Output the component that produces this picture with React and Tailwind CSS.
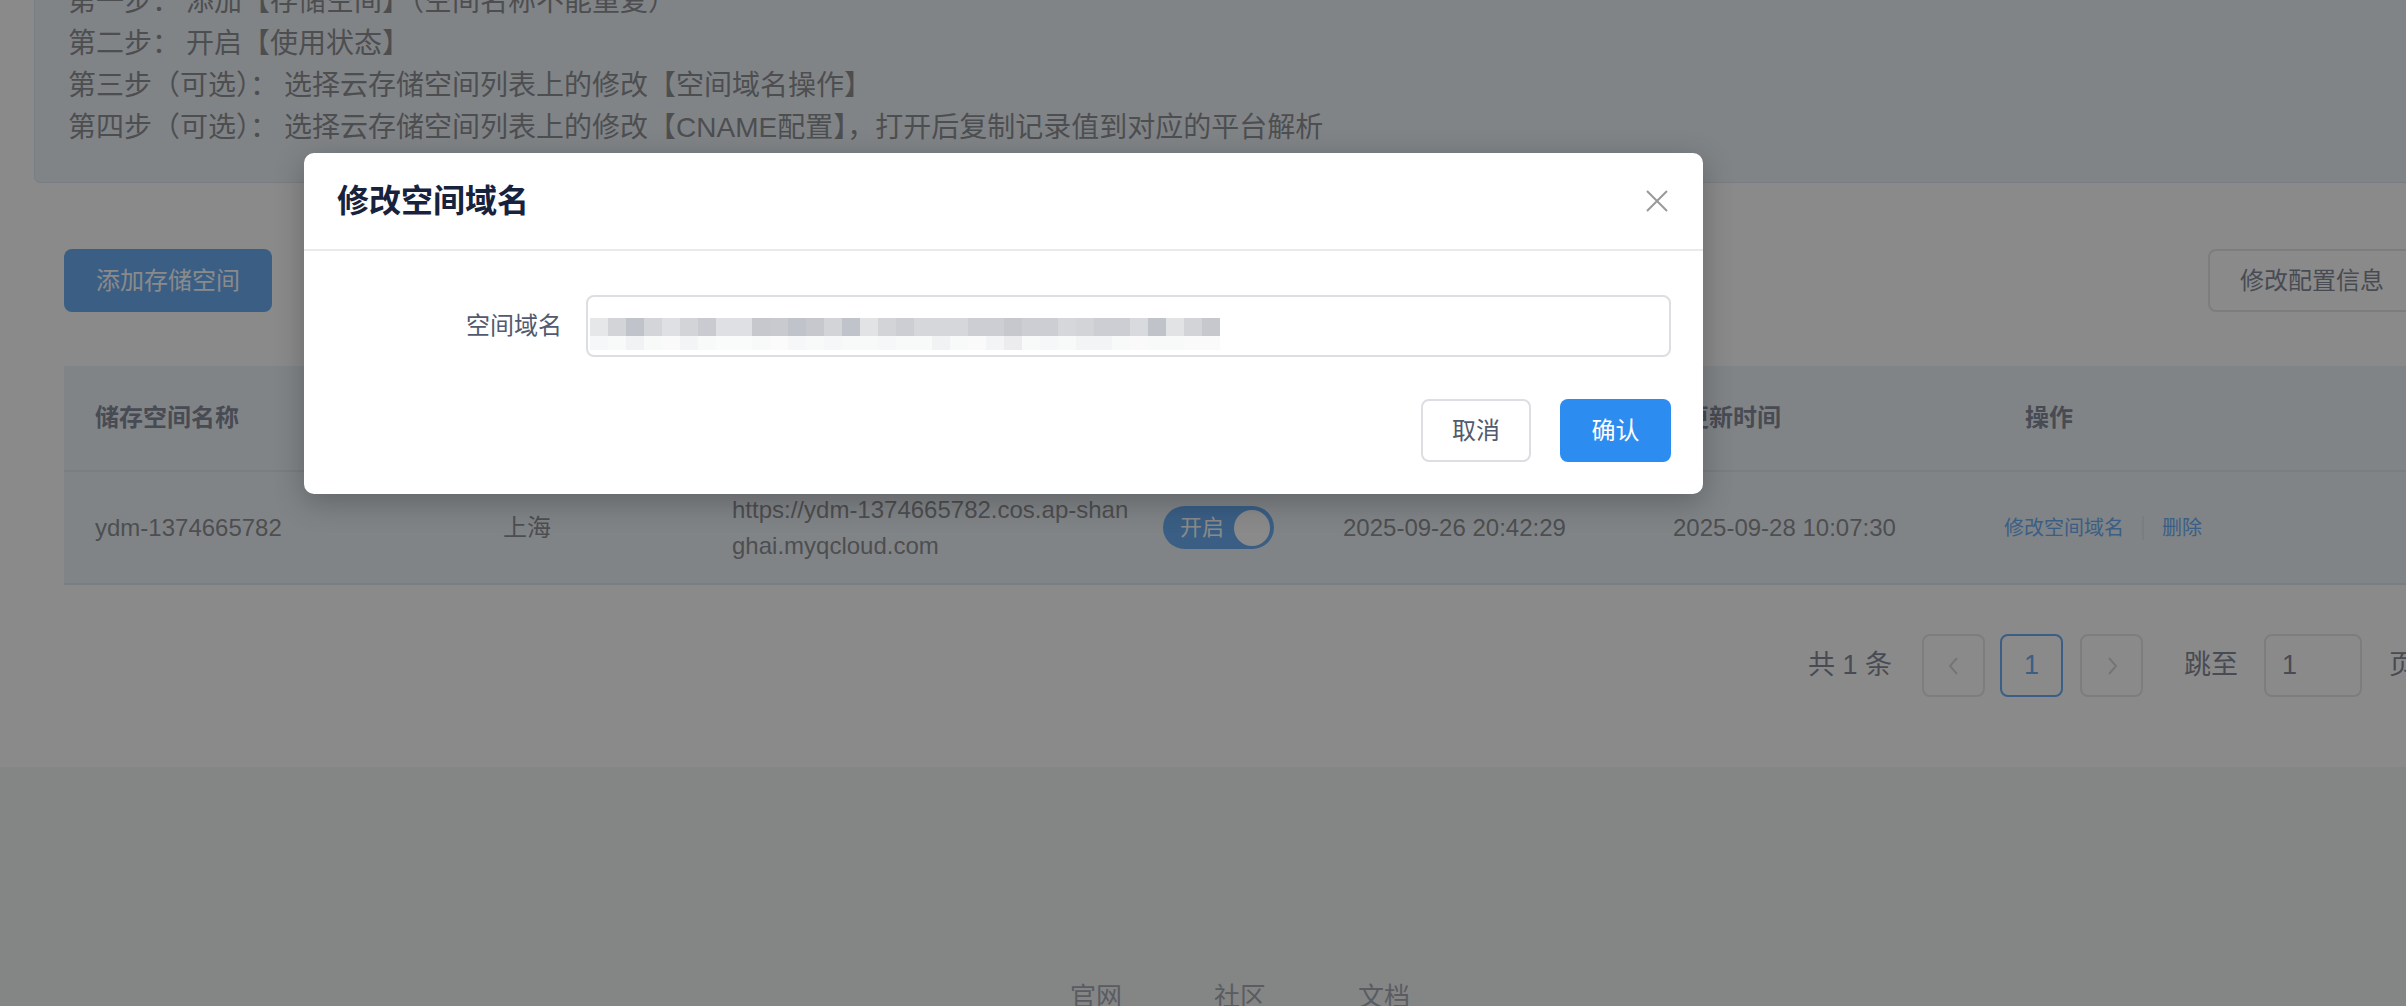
import { useState } from 'react'

const steps = [
  ["第一步：", "添加【存储空间】（空间名称不能重复）"],
  ["第二步：", "开启【使用状态】"],
  ["第三步（可选）：", "选择云存储空间列表上的修改【空间域名操作】"],
  ["第四步（可选）：", "选择云存储空间列表上的修改【CNAME配置】，打开后复制记录值到对应的平台解析"],
]

// pixelated (redacted) domain value in the input
const topRow = ["#e6e7e9","#d3d4d8","#c0c3c9","#d4d5d9","#dfe0e3","#d3d4d8","#c9cbd0","#dfe0e3","#dfe0e3","#c6c8cd","#c8cacf","#c0c3c9","#c6c8cd","#d3d4d8","#c0c3c9","#e2e3e5","#d3d4d8","#ccced3","#d6d7db","#d6d7db","#d6d7db","#ccced3","#ccced3","#c6c8cd","#ccced3","#ccced3","#d6d7db","#d3d4d8","#ccced3","#ccced3","#d9dadd","#c0c3c9","#e2e3e5","#d3d4d8","#c6c8cd"]
const bottomRow = ["#f6f7f8","#f8f9f9","#f1f2f3","#f8f9f9","#fafafa","#f3f4f5","#f8f9f9","#fafbfb","#fafbfb","#f8f9f9","#fbfbfb","#f6f7f8","#f8f9f9","#f6f7f8","#f8f9f9","#f8f9f9","#f6f7f8","#f8f9f9","#f8f9f9","#f1f2f4","#f8f9f9","#fafafa","#f3f4f5","#ececee","#f8f9f9","#f6f7f8","#f8f9f9","#f3f4f5","#f3f4f5","#f8f9f9","#fafafa","#f8f9f9","#f8f9f9","#fafafa","#fafafa"]

const Mosaic = () => (
  <svg width="630" height="32" viewBox="0 0 630 32">
    {topRow.map((c, i) => <rect key={"t" + i} x={i * 18} y="0" width="18" height="18" fill={c} />)}
    {bottomRow.map((c, i) => <rect key={"b" + i} x={i * 18} y="18" width="18" height="14" fill={c} />)}
  </svg>
)

const Chevron = ({ dir }) => (
  <svg width="12" height="20" viewBox="0 0 12 20" fill="none" stroke="#c5c8ce" strokeWidth="2">
    {dir === "left" ? <path d="M9 2 L2 10 L9 18" /> : <path d="M3 2 L10 10 L3 18" />}
  </svg>
)

const cols = "grid grid-cols-[408px_229px_431px_180px_330px_331px_443px]"

const App = () => {
  const [domain, setDomain] = useState("")

  return (
    <div className="relative w-[2406px] h-[1006px] overflow-hidden bg-white font-['Liberation_Sans','Noto_Sans_CJK_SC',sans-serif]">
      <div className="w-[2480px] flex flex-col">
        {/* main card */}
        <div className="bg-white h-[767px] px-[34px]">
          <div className="-mt-[53px] rounded-[6px] border border-[#cfdcec] bg-[#e6eef8] px-[33px] py-[33px] text-[28px] leading-[42px] text-[#606266]">
            {steps.map(([head, rest]) => (
              <p key={head} className="whitespace-nowrap">
                {head}<span className="ml-[6px]">{rest}</span>
              </p>
            ))}
          </div>

          <div className="px-[30px]">
            <div className="mt-[66px] flex justify-between">
              <button className="h-[63px] rounded-[8px] bg-[#2d8cf0] px-[32px] text-[24px] text-white">添加存储空间</button>
              <button className="h-[63px] rounded-[8px] border-2 border-[#dcdee2] bg-white px-[30px] text-[24px] text-[#515a6e]">修改配置信息</button>
            </div>

            <div className="mt-[54px] bg-[#e8eff8]">
              <div className={cols + " h-[106px] items-center border-b-2 border-[#d5dde8] bg-[#e6eef8] text-[24px] font-bold text-[#515a6e]"}>
                <div className="pl-[31px]">储存空间名称</div>
                <div className="pl-[31px]">所属地域</div>
                <div className="pl-[31px]">访问域名</div>
                <div className="pl-[31px]">使用状态</div>
                <div className="pl-[31px]">创建时间</div>
                <div className="pl-[43px]">更新时间</div>
                <div className="pl-[52px]">操作</div>
              </div>
              <div className={cols + " h-[113px] items-center border-b-2 border-[#d5dde8] text-[24px] text-[#606266]"}>
                <div className="pl-[31px]">ydm-1374665782</div>
                <div className="pl-[31px]">上海</div>
                <div className="pl-[31px] w-[436px] break-all leading-[36px]">https://ydm-1374665782.cos.ap-shanghai.myqcloud.com</div>
                <div className="pl-[31px]">
                  <div className="flex h-[43px] w-[111px] items-center justify-between rounded-full bg-[#2d8cf0] pl-[17px] pr-[4px]">
                    <span className="text-[22px] text-white">开启</span>
                    <span className="h-[36px] w-[36px] rounded-full bg-white"></span>
                  </div>
                </div>
                <div className="pl-[31px]">2025-09-26 20:42:29</div>
                <div className="pl-[31px]">2025-09-28 10:07:30</div>
                <div className="flex items-center pl-[31px] text-[20px] text-[#2d8cf0]">
                  <span>修改空间域名</span>
                  <span className="mx-[18px] h-[24px] w-[2px] bg-[#d5dde8]"></span>
                  <span>删除</span>
                </div>
              </div>
            </div>

            <div className="mt-[49px] flex items-center justify-end text-[27px] text-[#515a6e]">
              <span className="mr-[30px]">共 1 条</span>
              <div className="flex h-[63px] w-[63px] items-center justify-center rounded-[8px] border-2 border-[#dcdee2] bg-white">
                <Chevron dir="left" />
              </div>
              <div className="ml-[15px] flex h-[63px] w-[63px] items-center justify-center rounded-[8px] border-2 border-[#2d8cf0] bg-white text-[#2d8cf0]">1</div>
              <div className="ml-[17px] flex h-[63px] w-[63px] items-center justify-center rounded-[8px] border-2 border-[#dcdee2] bg-white">
                <Chevron dir="right" />
              </div>
              <span className="ml-[41px]">跳至</span>
              <div className="ml-[26px] flex h-[63px] w-[98px] items-center rounded-[8px] border-2 border-[#dcdee2] bg-white pl-[16px]">1</div>
              <span className="ml-[27px]">页</span>
            </div>
          </div>
        </div>

        {/* footer */}
        <div className="h-[300px] bg-[#eff3f1] pt-[212px]">
          <div className="flex justify-center gap-[92px] text-[26px] leading-[36px] text-[#808695]">
            <span>官网</span>
            <span>社区</span>
            <span>文档</span>
          </div>
        </div>
      </div>

      {/* modal mask */}
      <div className="absolute inset-0 bg-[rgba(66,66,66,0.62)]"></div>

      {/* modal */}
      <div className="absolute left-[304px] top-[153px] w-[1399px] rounded-[10px] bg-white shadow-[0_8px_30px_rgba(0,0,0,0.25)]">
        <div className="flex h-[98px] items-center justify-between border-b-2 border-[#e8eaec] pl-[33px] pr-[35px]">
          <span className="text-[32px] font-semibold text-[#17233d]">修改空间域名</span>
          <svg width="22" height="22" viewBox="0 0 22 22" stroke="#999" strokeWidth="2">
            <path d="M1 1 L21 21 M21 1 L1 21" />
          </svg>
        </div>
        <div className="px-[32px] pt-[44px] pb-[32px]">
          <div className="flex items-center">
            <label className="w-[250px] pr-[24px] text-right text-[24px] text-[#515a6e]">空间域名</label>
            <div className="relative h-[62px] flex-1 rounded-[8px] border-2 border-[#dcdee2] pl-[2px] pt-[21px]">
              <Mosaic />
              <input
                value={domain}
                onChange={(e) => setDomain(e.target.value)}
                className="absolute inset-0 bg-transparent outline-none"
              />
            </div>
          </div>
          <div className="mt-[42px] flex justify-end gap-[29px]">
            <button className="h-[63px] w-[110px] rounded-[8px] border-2 border-[#dcdee2] bg-white text-[24px] text-[#515a6e]">取消</button>
            <button className="h-[63px] w-[111px] rounded-[8px] bg-[#2d8cf0] text-[24px] text-white">确认</button>
          </div>
        </div>
      </div>
    </div>
  )
}

export default App
